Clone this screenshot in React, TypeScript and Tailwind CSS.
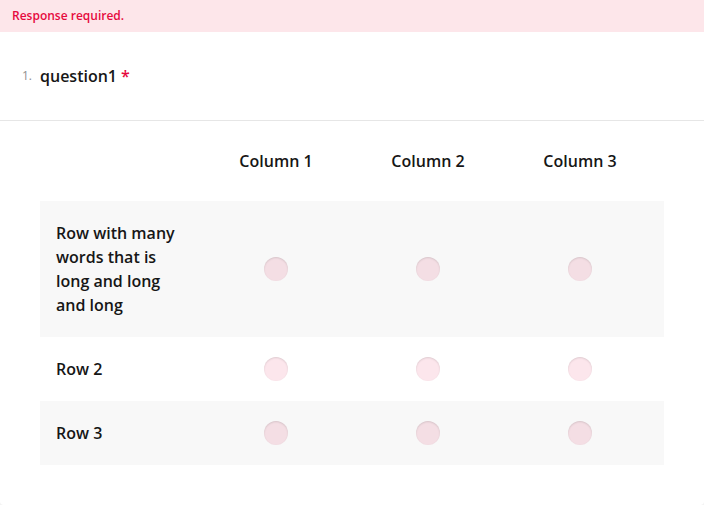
const columns = ['Column 1', 'Column 2', 'Column 3'];

const rows = [
  { label: 'Row with many words that is long and long and long', shaded: true },
  { label: 'Row 2', shaded: false },
  { label: 'Row 3', shaded: true },
];

function Radio({ shaded }: { shaded: boolean }) {
  return (
    <span
      className={
        'block h-6 w-6 rounded-full shadow-[inset_0_1px_2px_rgba(0,0,0,0.12)] ' +
        (shaded ? 'bg-[#f4dee4]' : 'bg-[#fce6ec]')
      }
    />
  );
}

export default function App() {
  return (
    <div className="min-h-[505px] bg-[#f3f3f3] font-['Open_Sans',sans-serif]">
      <div className="h-[505px] overflow-hidden rounded-b-[4px] bg-white">
        <div className="flex h-8 items-center bg-[#fde6ea] px-3 text-xs font-semibold leading-4 text-[#e60a3e]">
          Response required.
        </div>

        <div className="flex h-[89px] items-center border-b border-[#e6e6e6] pb-px pl-[22px]">
          <span className="w-[18px] text-xs leading-4 text-[#909090]">1.</span>
          <span className="text-base font-semibold leading-6 text-[#161616]">question1</span>
          <span className="ml-1 text-base font-semibold leading-6 text-[#e60a3e]">*</span>
        </div>

        <div className="px-10">
          <div className="grid grid-cols-[160px_152px_152px_152px_1fr]">
            <div className="h-20" />
            {columns.map((c) => (
              <div
                key={c}
                className="flex h-20 items-center justify-center text-base font-semibold leading-6 text-[#161616]"
              >
                {c}
              </div>
            ))}
            <div />
          </div>

          {rows.map((r) => (
            <div
              key={r.label}
              className={
                'grid grid-cols-[160px_152px_152px_152px_1fr] ' + (r.shaded ? 'bg-[#f8f8f8]' : 'bg-white')
              }
            >
              <div className="px-4 py-5 text-base font-semibold leading-6 text-[#161616]">{r.label}</div>
              {columns.map((c) => (
                <div key={c} className="flex items-center justify-center">
                  <Radio shaded={r.shaded} />
                </div>
              ))}
              <div />
            </div>
          ))}
        </div>
      </div>
    </div>
  );
}
